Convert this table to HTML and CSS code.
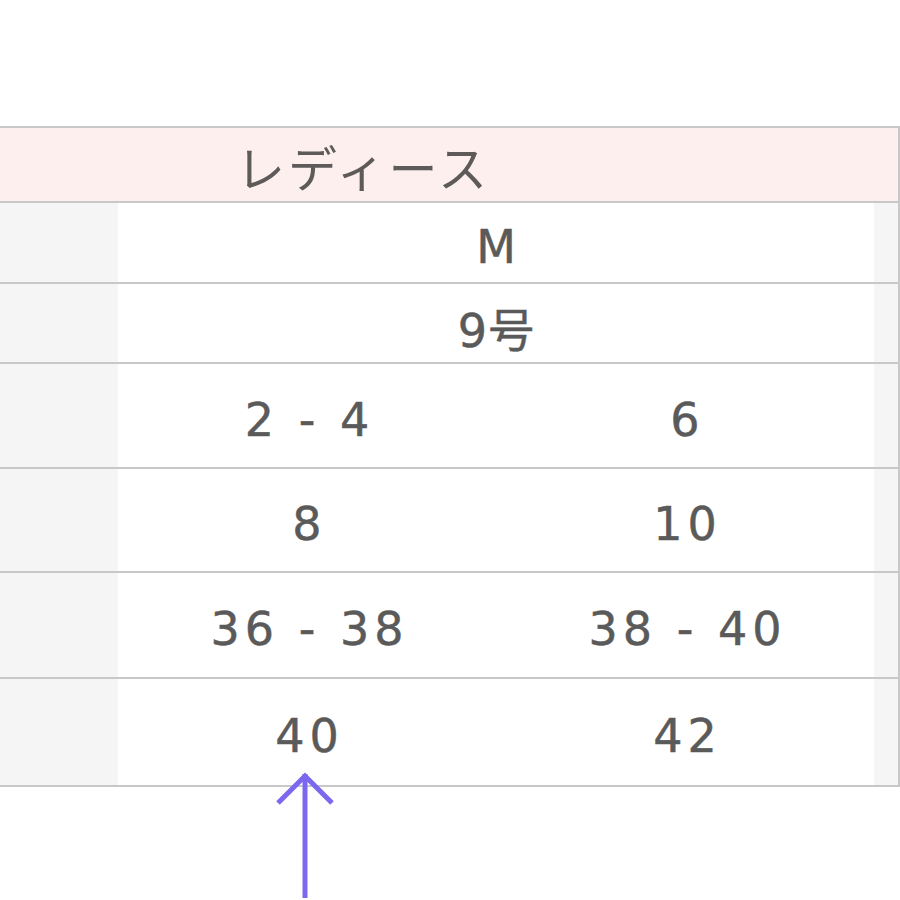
FILE: index.html
```html
<!DOCTYPE html>
<html lang="ja">
<head>
<meta charset="utf-8">
<title>サイズ表</title>
<link rel="stylesheet" href="styles.css">
</head>
<body>
<div class="page">
  <div class="table">
    <div class="row head">
      <div class="head-title">レディース</div>
    </div>
    <div class="row r1">
      <div class="side"></div>
      <div class="cell span2">M</div>
      <div class="side"></div>
    </div>
    <div class="row r2">
      <div class="side"></div>
      <div class="cell span2 tight">9号</div>
      <div class="side"></div>
    </div>
    <div class="row r3">
      <div class="side"></div>
      <div class="cell">2 - 4</div>
      <div class="cell">6</div>
      <div class="side"></div>
    </div>
    <div class="row r4">
      <div class="side"></div>
      <div class="cell">8</div>
      <div class="cell">10</div>
      <div class="side"></div>
    </div>
    <div class="row r5">
      <div class="side"></div>
      <div class="cell">36 - 38</div>
      <div class="cell">38 - 40</div>
      <div class="side"></div>
    </div>
    <div class="row r6">
      <div class="side"></div>
      <div class="cell">40</div>
      <div class="cell">42</div>
      <div class="side"></div>
    </div>
  </div>
  <svg class="arrow" width="70" height="130" viewBox="0 0 70 130" aria-hidden="true">
    <path d="M36 6 V130" stroke="#7b68ee" stroke-width="5" fill="none"/>
    <path d="M9 35 L36 8 L63 35" stroke="#7b68ee" stroke-width="5" fill="none" stroke-linecap="butt"/>
  </svg>
</div>
</body>
</html>
```

FILE: styles.css
```css
html, body {
  margin: 0;
  padding: 0;
  background: #ffffff;
}

.page {
  position: relative;
  width: 900px;
  height: 900px;
  overflow: hidden;
  padding-top: 126px;
  box-sizing: border-box;
  font-family: "DejaVu Sans", "Noto Sans CJK JP", sans-serif;
  color: #5a5a5a;
}

.table {
  width: 900px;
  border-top: 2px solid #c8c8c8;
  border-right: 2px solid #c8c8c8;
  box-sizing: border-box;
}

.row {
  display: grid;
  grid-template-columns: 118px 1fr 1fr 24px;
  border-bottom: 2px solid #c8c8c8;
}

.head {
  display: flex;
  align-items: center;
  height: 73px;
  background: #fcefee;
}

.head-title {
  padding-left: 236px;
  padding-top: 2px;
  font-family: "Noto Sans CJK JP", sans-serif;
  font-size: 49px;
  letter-spacing: 3px;
  color: #5e5a5a;
}

.side {
  background: #f5f5f5;
}

.cell {
  display: flex;
  align-items: center;
  justify-content: center;
  padding-top: 8px;
  font-size: 46px;
  letter-spacing: 5px;
  text-indent: 5px;
  -webkit-text-stroke: 0.5px #5a5a5a;
  background: #ffffff;
}

.tight {
  letter-spacing: 1px;
  text-indent: 1px;
}

.span2 {
  grid-column: span 2;
}

.r1 { height: 79px; }
.r2 { height: 78px; }
.r3 { height: 103px; }
.r4 { height: 102px; }
.r5 { height: 104px; }
.r6 { height: 106px; }

.arrow {
  position: absolute;
  left: 269px;
  top: 768px;
}
```
